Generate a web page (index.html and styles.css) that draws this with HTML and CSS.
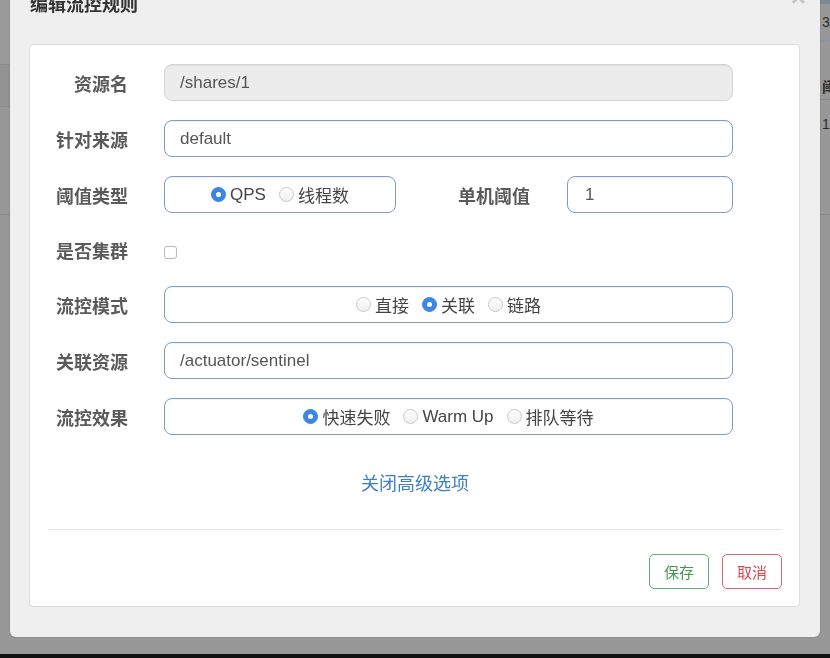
FILE: index.html
```html
<!DOCTYPE html>
<html lang="zh-CN">
<head>
<meta charset="utf-8">
<title>编辑流控规则</title>
<link rel="stylesheet" href="styles.css">
</head>
<body>
<div class="page">
  <div class="bg-left">
    <div class="bg-row bl-a"></div>
    <div class="bg-row bl-b"></div>
    <div class="bg-row bl-c"></div>
  </div>
  <div class="bg-mid"></div>
  <div class="bg-right">
    <div class="bg-row br-top"></div>
    <div class="bg-row br-a"><span class="bg-text">3:</span></div>
    <div class="bg-row br-b"><span class="bg-text">阈</span></div>
    <div class="bg-row br-c"><span class="bg-text">1</span></div>
  </div>
</div>

<div class="modal">
  <div class="modal-header">
    <h4 class="modal-title">编辑流控规则</h4>
    <button class="close" type="button">×</button>
  </div>
  <div class="modal-body">
    <div class="card">
      <div class="form">
        <div class="row">
          <label class="lbl">资源名</label>
          <div class="input disabled">/shares/1</div>
        </div>
        <div class="row">
          <label class="lbl">针对来源</label>
          <div class="input">default</div>
        </div>
        <div class="row">
          <label class="lbl">阈值类型</label>
          <div class="input radio-box small">
            <span class="radio checked"></span><span class="rtext">QPS</span>
            <span class="radio"></span><span class="rtext">线程数</span>
          </div>
          <label class="lbl lbl-wide">单机阈值</label>
          <div class="input grow">1</div>
        </div>
        <div class="row row-check">
          <label class="lbl">是否集群</label>
          <span class="checkbox"></span>
        </div>
        <div class="row">
          <label class="lbl">流控模式</label>
          <div class="input radio-box">
            <span class="radio"></span><span class="rtext">直接</span>
            <span class="radio checked"></span><span class="rtext">关联</span>
            <span class="radio"></span><span class="rtext">链路</span>
          </div>
        </div>
        <div class="row">
          <label class="lbl">关联资源</label>
          <div class="input">/actuator/sentinel</div>
        </div>
        <div class="row">
          <label class="lbl">流控效果</label>
          <div class="input radio-box">
            <span class="radio checked"></span><span class="rtext">快速失败</span>
            <span class="radio"></span><span class="rtext">Warm Up</span>
            <span class="radio"></span><span class="rtext">排队等待</span>
          </div>
        </div>
      </div>
      <div class="toggle"><a class="toggle-link">关闭高级选项</a></div>
      <div class="divider"></div>
      <div class="footer">
        <button class="btn btn-save" type="button">保存</button>
        <button class="btn btn-cancel" type="button">取消</button>
      </div>
    </div>
  </div>
</div>
</body>
</html>
```

FILE: styles.css
```css
html {
  background: #111;
}
body {
  margin: 0;
  height: 654px;
  background: #989898;
  font-family: "Liberation Sans", "Noto Sans CJK SC", sans-serif;
  overflow: hidden;
}

/* background page behind the overlay */
.page {
  display: flex;
  height: 654px;
}
.bg-left {
  width: 10px;
  display: flex;
  flex-direction: column;
}
.bg-mid {
  flex: 1;
}
.bg-right {
  width: 10px;
  display: flex;
  flex-direction: column;
  overflow: hidden;
}
.bg-row {
  border-bottom: 1px solid #8c8c8c;
  box-sizing: border-box;
}
.bl-a { height: 65px; background: #9a9a9a; }
.bl-b { height: 42px; background: #939393; }
.bl-c { height: 108px; }
.br-top { height: 4px; background: #7f8a97; border: 0; }
.br-a { height: 38px; border-bottom: 2px solid #8796a8; }
.br-b { height: 58px; }
.br-c { height: 115px; }
.bg-text {
  display: block;
  padding-left: 2px;
  font-size: 14px;
  color: #2a2a2a;
  white-space: nowrap;
}
.br-a .bg-text { padding-top: 10px; }
.br-b .bg-text { padding-top: 34px; font-weight: bold; }
.br-c .bg-text { padding-top: 16px; }

/* modal */
.modal {
  position: fixed;
  left: 10px;
  top: -22px;
  width: 810px;
  height: 659px;
  background: #efefef;
  border-radius: 6px;
  box-shadow: 0 0 2px rgba(0, 0, 0, 0.25);
  box-sizing: border-box;
  display: flex;
  flex-direction: column;
}
.modal-header {
  position: relative;
  padding: 14px 20px 0 20px;
}
.modal-title {
  margin: 0;
  font-size: 18px;
  line-height: 26px;
  font-weight: bold;
  color: #333;
}
.close {
  position: absolute;
  right: 14px;
  top: 6px;
  padding: 0;
  border: 0;
  background: none;
  font-family: "Liberation Sans", sans-serif;
  font-size: 26px;
  line-height: 1;
  font-weight: bold;
  color: #c4c4c4;
}
.modal-body {
  padding: 26px 20px 31px 19px;
  flex: 1;
  display: flex;
  flex-direction: column;
}
.card {
  flex: 1;
  background: #fff;
  border: 1px solid #dcdcdc;
  border-radius: 4px;
  padding: 19px 17px 17px 18px;
  display: flex;
  flex-direction: column;
}

/* form */
.form {
  display: flex;
  flex-direction: column;
  gap: 19px;
  padding-right: 49px;
}
.row {
  display: flex;
  align-items: center;
  height: 37px;
}
.row-check {
  height: 35px;
}
.lbl {
  width: 80px;
  flex: none;
  margin-right: 36px;
  text-align: right;
  font-size: 18px;
  font-weight: bold;
  color: #5a5a5a;
  white-space: nowrap;
}
.lbl-wide {
  width: 134px;
  margin-right: 37px;
}
.input {
  flex: 1;
  height: 37px;
  box-sizing: border-box;
  border: 1px solid #7f9dc3;
  border-radius: 8px;
  padding: 0 15px;
  display: flex;
  align-items: center;
  font-size: 17px;
  color: #555;
  background: #fff;
  box-shadow: inset 0 1px 1px rgba(0, 0, 0, 0.06);
}
.input.disabled {
  background: #ececec;
  border-color: #d5d5d5;
}
.input.small {
  flex: none;
  width: 232px;
}
.input.grow {
  flex: 1;
  padding-left: 17px;
}
.radio-box {
  justify-content: center;
  padding: 0 10px;
}
.radio {
  width: 15px;
  height: 15px;
  box-sizing: border-box;
  border-radius: 50%;
  border: 1px solid #cacaca;
  background: linear-gradient(#ffffff, #efefef);
  flex: none;
  position: relative;
  margin-right: 4px;
}
.radio.checked {
  border-color: #3a86e4;
  background: #3a86e4;
}
.radio.checked::after {
  content: "";
  position: absolute;
  left: 4px;
  top: 4px;
  width: 5px;
  height: 5px;
  border-radius: 50%;
  background: #fff;
}
.rtext {
  margin-right: 13px;
  color: #444;
  font-size: 17px;
}
.rtext:last-child {
  margin-right: 0;
}
.checkbox {
  width: 13px;
  height: 13px;
  box-sizing: border-box;
  border: 1px solid #b8b8b8;
  border-radius: 3px;
  background: #fff;
  margin-top: 6px;
}

/* advanced toggle */
.toggle {
  text-align: center;
  margin-top: 36px;
  line-height: 26px;
}
.toggle-link {
  font-size: 18px;
  color: #3d7fc2;
  cursor: pointer;
}
.divider {
  height: 1px;
  background: #e6e6e6;
  margin-top: 31px;
}
.footer {
  display: flex;
  justify-content: flex-end;
  gap: 13px;
  margin-top: 24px;
}
.btn {
  height: 35px;
  padding: 0 14px;
  border-radius: 5px;
  background: #fff;
  font-family: "Liberation Sans", "Noto Sans CJK SC", sans-serif;
  font-size: 15px;
  cursor: pointer;
}
.btn-save {
  border: 1px solid #62ad70;
  color: #3f9a4f;
}
.btn-cancel {
  border: 1px solid #dc6672;
  color: #d9474f;
}
```
